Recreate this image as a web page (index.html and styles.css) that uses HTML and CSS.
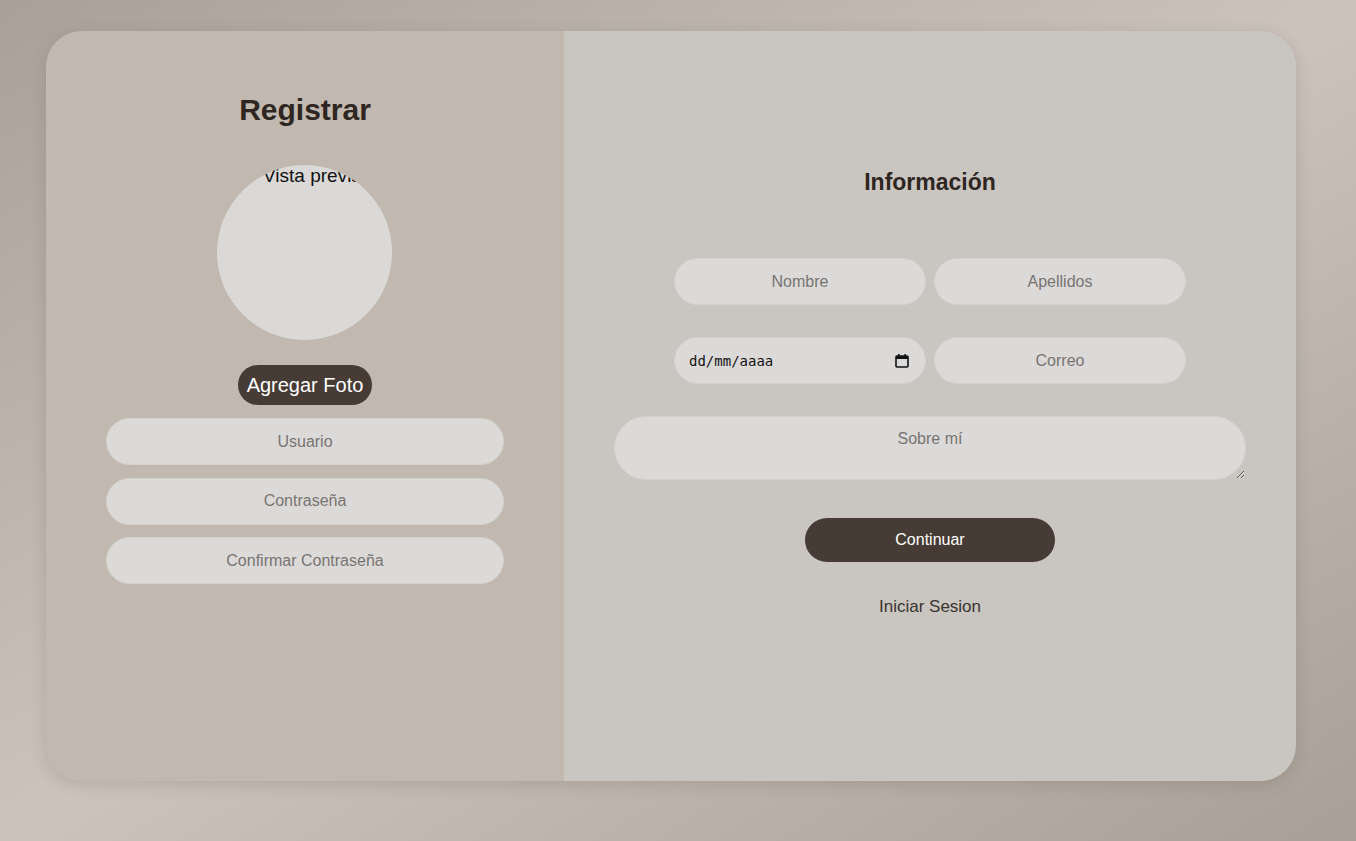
FILE: index.html
```html
<!DOCTYPE html>
<html lang="es">
<head>
<meta charset="utf-8">
<title>Registrar</title>
<link rel="stylesheet" href="styles.css">
</head>
<body>
<main class="card">
  <section class="left">
    <h1 class="title">Registrar</h1>
    <div class="preview"><span class="preview-text">Vista previa</span></div>
    <button class="btn-photo" type="button">Agregar Foto</button>
    <div class="left-fields">
      <input class="field" type="text" placeholder="Usuario">
      <input class="field" type="password" placeholder="Contraseña">
      <input class="field" type="password" placeholder="Confirmar Contraseña">
    </div>
  </section>
  <section class="right">
    <h2 class="subtitle">Información</h2>
    <div class="grid">
      <input class="field" type="text" placeholder="Nombre">
      <input class="field" type="text" placeholder="Apellidos">
      <div class="date field">
        <span class="date-text">dd/mm/aaaa</span>
        <svg class="cal" width="16" height="16" viewBox="0 0 16 16"><rect x="2" y="3" width="12" height="11" rx="1" fill="none" stroke="#111" stroke-width="1.6"/><rect x="2" y="3" width="12" height="3" fill="#111"/><rect x="4" y="1" width="1.6" height="3" fill="#111"/><rect x="10.4" y="1" width="1.6" height="3" fill="#111"/></svg>
      </div>
      <input class="field" type="email" placeholder="Correo">
    </div>
    <textarea class="about" placeholder="Sobre mí"></textarea>
    <button class="btn-continue" type="button">Continuar</button>
    <a class="login" href="#">Iniciar Sesion</a>
  </section>
</main>
</body>
</html>
```
FILE: styles.css
```css
* { box-sizing: border-box; }
html, body { margin: 0; height: 100%; }
body {
  font-family: "Liberation Sans", Arial, sans-serif;
  background: linear-gradient(to bottom right, #a9a199 0%, #cbc3bc 50%, #a8a097 100%);
  padding: 31px 60px 60px 46px;
}
.card {
  width: 1250px;
  height: 750px;
  border-radius: 36px;
  overflow: hidden;
  display: flex;
  box-shadow: 0 4px 16px rgba(80, 70, 60, 0.18);
}
.left {
  width: 518px;
  background: #c1b9b0;
  display: flex;
  flex-direction: column;
  align-items: center;
  padding-top: 60px;
}
.title {
  margin: 0;
  font-size: 30px;
  font-weight: bold;
  color: #2f2622;
  line-height: 38px;
}
.preview {
  margin-top: 36px;
  margin-right: 1px;
  width: 175px;
  height: 175px;
  border-radius: 50%;
  background: #dbd9d7;
  overflow: hidden;
  white-space: nowrap;
  padding-left: 46px;
}
.preview-text {
  display: block;
  font-size: 19px;
  line-height: 22px;
  color: #111;
}
.btn-photo {
  margin-top: 25px;
  height: 40px;
  padding: 0 9px;
  border: none;
  border-radius: 20px;
  background: #473b35;
  color: #fff;
  font-family: "Liberation Sans", Arial, sans-serif;
  font-size: 20px;
}
.left-fields {
  margin-top: 13px;
  display: flex;
  flex-direction: column;
  gap: 12.5px;
}
.field {
  width: 398px;
  height: 47px;
  border: 1px solid #d4d1ce;
  border-radius: 24px;
  background: #dcdad8;
  font-family: "Liberation Sans", Arial, sans-serif;
  font-size: 16px;
  text-align: center;
  color: #333;
  outline: none;
}
.field::placeholder { color: #787472; }
.right {
  flex: 1;
  background: #c9c6c1;
  display: flex;
  flex-direction: column;
  align-items: center;
  padding-top: 137px;
}
.subtitle {
  margin: 0;
  font-size: 23px;
  font-weight: bold;
  color: #2f2622;
  line-height: 28px;
}
.grid {
  margin-top: 62px;
  display: grid;
  grid-template-columns: 252px 252px;
  column-gap: 8px;
  row-gap: 32px;
}
.grid .field { width: 252px; }
.date {
  display: flex;
  align-items: center;
  justify-content: space-between;
  padding: 0 15px 0 14px;
  text-align: left;
}
.date-text {
  font-family: "DejaVu Sans Mono", "Liberation Mono", monospace;
  font-size: 14px;
  color: #111;
}
.about {
  margin-top: 32px;
  width: 632px;
  height: 64px;
  border: 1px solid #d4d1ce;
  border-radius: 32px;
  background: #dcdad8;
  font-family: "Liberation Sans", Arial, sans-serif;
  font-size: 16px;
  text-align: center;
  padding-top: 13px;
  outline: none;
}
.about::placeholder { color: #787472; }
.btn-continue {
  margin-top: 38px;
  width: 250px;
  height: 44px;
  border: none;
  border-radius: 22px;
  background: #473b35;
  color: #fff;
  font-family: "Liberation Sans", Arial, sans-serif;
  font-size: 16px;
}
.login {
  margin-top: 35px;
  font-size: 17px;
  color: #3a3330;
  text-decoration: none;
}
```
